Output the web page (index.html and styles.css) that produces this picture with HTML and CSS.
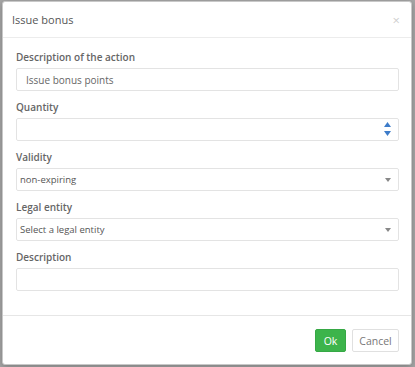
FILE: index.html
```html
<!DOCTYPE html>
<html lang="en">
<head>
    <meta charset="UTF-8">
    <meta name="viewport" content="width=device-width, initial-scale=1.0">
    <title>Issue bonus</title>
    <link rel="stylesheet" href="styles.css">
</head>
<body>

    <div class="modal">
        <div class="modal-header">
            <h4 class="modal-title">Issue bonus</h4>
            <span class="close">&times;</span>
        </div>

        <div class="modal-body">
            <div class="field">
                <label for="action">Description of the action</label>
                <input type="text" id="action" class="control" value="Issue bonus points">
            </div>

            <div class="field">
                <label for="quantity">Quantity</label>
                <div class="control number">
                    <span class="spinner">
                        <svg width="7" height="15" viewBox="0 0 7 15">
                            <path d="M3.5 0 L7 5 L0 5 Z" fill="#3d7cc9"/>
                            <path d="M0 9 L7 9 L3.5 14 Z" fill="#3d7cc9"/>
                        </svg>
                    </span>
                </div>
            </div>

            <div class="field">
                <label>Validity</label>
                <div class="control select">
                    <span>non-expiring</span>
                    <span class="caret"></span>
                </div>
            </div>

            <div class="field">
                <label>Legal entity</label>
                <div class="control select">
                    <span>Select a legal entity</span>
                    <span class="caret"></span>
                </div>
            </div>

            <div class="field">
                <label for="descr">Description</label>
                <input type="text" id="descr" class="control">
            </div>
        </div>

        <div class="modal-footer">
            <button class="btn btn-ok">Ok</button>
            <button class="btn btn-cancel">Cancel</button>
        </div>
    </div>

</body>
</html>
```

FILE: styles.css
```css
body {
    margin: 0;
    background: #a6a6a6;
    font-family: 'Open Sans', sans-serif;
    color: #555;
    height: 367px;
    overflow: hidden;
}

.modal {
    margin: 1px 0 0 2px;
    width: 408px;
    background: #fff;
    border: 1px solid #c8c8c8;
    border-radius: 3px;
    box-shadow: 0 2px 6px rgba(0, 0, 0, 0.25);
}

.modal-header {
    height: 35px;
    display: flex;
    align-items: center;
    justify-content: space-between;
    padding: 0 11px 0 9px;
    border-bottom: 1px solid #ececec;
}

.modal-title {
    margin: 0;
    font-size: 11px;
    font-weight: normal;
    color: #555;
}

.close {
    font-size: 13px;
    color: #cfcfcf;
}

.modal-body {
    padding: 11px 12px 24px 13px;
}

.field {
    margin-bottom: 8px;
}

.field:last-child {
    margin-bottom: 0;
}

label {
    display: block;
    font-size: 10px;
    font-weight: 600;
    line-height: 16px;
    margin-bottom: 3px;
    color: #666;
}

.control {
    display: flex;
    align-items: center;
    box-sizing: border-box;
    width: 100%;
    height: 23px;
    border: 1px solid #e3e3e3;
    border-radius: 2px;
    background: #fff;
    font-family: 'Open Sans', sans-serif;
    font-size: 10px;
    color: #666;
    padding: 0 9px;
    outline: none;
}

.number {
    justify-content: flex-end;
    padding-right: 7px;
}

.spinner svg {
    display: block;
}

.select {
    justify-content: space-between;
    padding: 0 7px 0 3px;
    font-size: 9.5px;
    color: #555;
}

.caret {
    width: 0;
    height: 0;
    border-left: 3.5px solid transparent;
    border-right: 3.5px solid transparent;
    border-top: 4px solid #888;
}

.modal-footer {
    display: flex;
    justify-content: flex-end;
    gap: 6px;
    padding: 13px 12px 12px;
    border-top: 1px solid #e6e6e6;
}

.btn {
    height: 23px;
    border-radius: 2px;
    font-family: 'Open Sans', sans-serif;
    font-size: 10.5px;
    padding: 0;
    cursor: pointer;
}

.btn-ok {
    width: 31px;
    background: #3cb44b;
    border: 1px solid #36a845;
    color: #fff;
}

.btn-cancel {
    width: 47px;
    background: #fff;
    border: 1px solid #e0e0e0;
    color: #777;
}
```
